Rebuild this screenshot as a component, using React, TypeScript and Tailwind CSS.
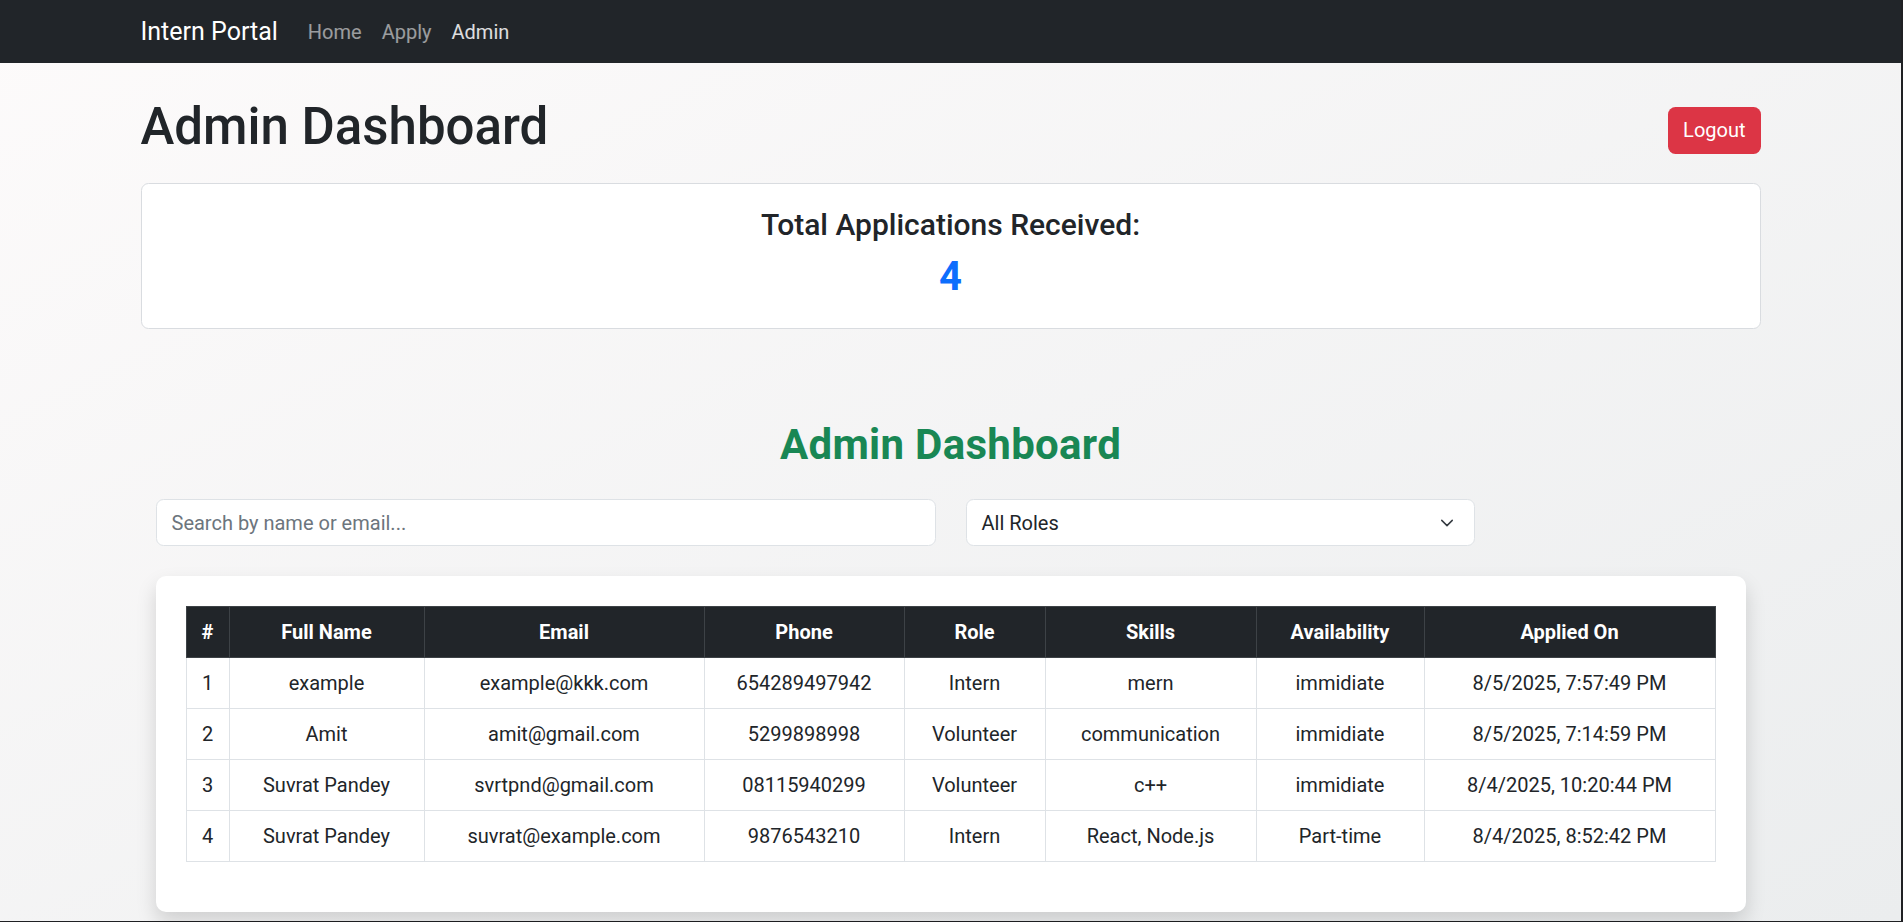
import React from 'react';

const rows = [
  { id: 1, name: 'example', email: 'example@kkk.com', phone: '654289497942', role: 'Intern', skills: 'mern', availability: 'immidiate', applied: '8/5/2025, 7:57:49 PM' },
  { id: 2, name: 'Amit', email: 'amit@gmail.com', phone: '5299898998', role: 'Volunteer', skills: 'communication', availability: 'immidiate', applied: '8/5/2025, 7:14:59 PM' },
  { id: 3, name: 'Suvrat Pandey', email: 'svrtpnd@gmail.com', phone: '08115940299', role: 'Volunteer', skills: 'c++', availability: 'immidiate', applied: '8/4/2025, 10:20:44 PM' },
  { id: 4, name: 'Suvrat Pandey', email: 'suvrat@example.com', phone: '9876543210', role: 'Intern', skills: 'React, Node.js', availability: 'Part-time', applied: '8/4/2025, 8:52:42 PM' },
];

const columns = [
  { label: '#', width: 'w-[43px]' },
  { label: 'Full Name', width: 'w-[195px]' },
  { label: 'Email', width: 'w-[280px]' },
  { label: 'Phone', width: 'w-[200px]' },
  { label: 'Role', width: 'w-[141px]' },
  { label: 'Skills', width: 'w-[211px]' },
  { label: 'Availability', width: 'w-[168px]' },
  { label: 'Applied On', width: 'w-[291px]' },
];

function Navbar() {
  return (
    <nav className="h-[63px] bg-[#212529]">
      <div className="mx-auto flex h-full w-[1620px] items-center">
        <a className="mr-[20px] text-[25px] leading-[37px] text-white">Intern Portal</a>
        <div className="flex items-center text-[20px]">
          <a className="px-[10px] text-white/55">Home</a>
          <a className="px-[10px] text-white/55">Apply</a>
          <a className="px-[10px] text-white/85">Admin</a>
        </div>
      </div>
    </nav>
  );
}

function StatsCard() {
  return (
    <div className="rounded-[7.5px] border border-[#d9dce0] bg-white px-[20px] pt-[23px] pb-[17px] text-center">
      <h4 className="mb-[10px] text-[30px] leading-[36px] font-medium">Total Applications Received:</h4>
      <h2 className="mb-[10px] text-[40px] leading-[48px] font-bold text-[#0d6efd]">{rows.length}</h2>
    </div>
  );
}

function Filters() {
  return (
    <div className="mb-[30px] flex gap-[30px]">
      <input
        type="text"
        placeholder="Search by name or email..."
        className="h-[47px] w-[780px] rounded-[7.5px] border border-[#dee2e6] bg-white px-[15px] text-[20px] outline-none placeholder:text-[#6c757d]"
      />
      <div className="relative flex h-[47px] w-[509px] items-center rounded-[7.5px] border border-[#dee2e6] bg-white px-[15px] text-[20px]">
        <span>All Roles</span>
        <svg className="absolute right-[20px] h-[14px] w-[14px]" viewBox="0 0 16 16" fill="none">
          <path d="m2 5 6 6 6-6" stroke="#343a40" strokeWidth="1.7" strokeLinecap="round" strokeLinejoin="round" />
        </svg>
      </div>
    </div>
  );
}

function ApplicationsTable() {
  return (
    <div className="rounded-[10px] bg-white p-[30px] shadow-[0_10px_20px_rgba(0,0,0,0.15)]">
      <table className="mb-[20px] w-full table-fixed border-collapse text-center text-[20px]">
        <thead>
          <tr className="bg-[#212529] text-white">
            {columns.map((c) => (
              <th key={c.label} className={`${c.width} border border-[#3d4246] px-[10px] py-[10px] leading-[30px] font-bold`}>
                {c.label}
              </th>
            ))}
          </tr>
        </thead>
        <tbody>
          {rows.map((r) => (
            <tr key={r.id}>
              <td className="border border-[#dee2e6] px-[10px] py-[10px] leading-[30px]">{r.id}</td>
              <td className="border border-[#dee2e6] px-[10px] py-[10px] leading-[30px]">{r.name}</td>
              <td className="border border-[#dee2e6] px-[10px] py-[10px] leading-[30px]">{r.email}</td>
              <td className="border border-[#dee2e6] px-[10px] py-[10px] leading-[30px]">{r.phone}</td>
              <td className="border border-[#dee2e6] px-[10px] py-[10px] leading-[30px]">{r.role}</td>
              <td className="border border-[#dee2e6] px-[10px] py-[10px] leading-[30px]">{r.skills}</td>
              <td className="border border-[#dee2e6] px-[10px] py-[10px] leading-[30px]">{r.availability}</td>
              <td className="border border-[#dee2e6] px-[10px] py-[10px] leading-[30px]">{r.applied}</td>
            </tr>
          ))}
        </tbody>
      </table>
    </div>
  );
}

export default function App() {
  return (
    <div className="min-h-screen border-r-2 border-b border-[#1f2023] bg-linear-to-br from-[#fdfbfb] to-[#ebedee] font-['Roboto','Noto_Sans',sans-serif] text-[#212529]">
      <Navbar />

      <div className="mx-auto w-[1620px]">
        <div className="mt-[30px] mb-[20px] flex items-center justify-between">
          <h1 className="mb-[6px] pt-[4px] text-[51px] leading-[60px] font-medium">Admin Dashboard</h1>
          <button className="mt-[4px] h-[47px] rounded-[7.5px] bg-[#dc3545] px-[15px] text-[20px] text-white">Logout</button>
        </div>
        <StatsCard />
      </div>

      <div className="mx-auto mt-[92px] w-[1590px]">
        <h2 className="mb-[30px] text-center text-[42px] leading-[48px] font-bold tracking-[0.3px] text-[#198754]">Admin Dashboard</h2>
        <Filters />
        <ApplicationsTable />
      </div>
    </div>
  );
}
